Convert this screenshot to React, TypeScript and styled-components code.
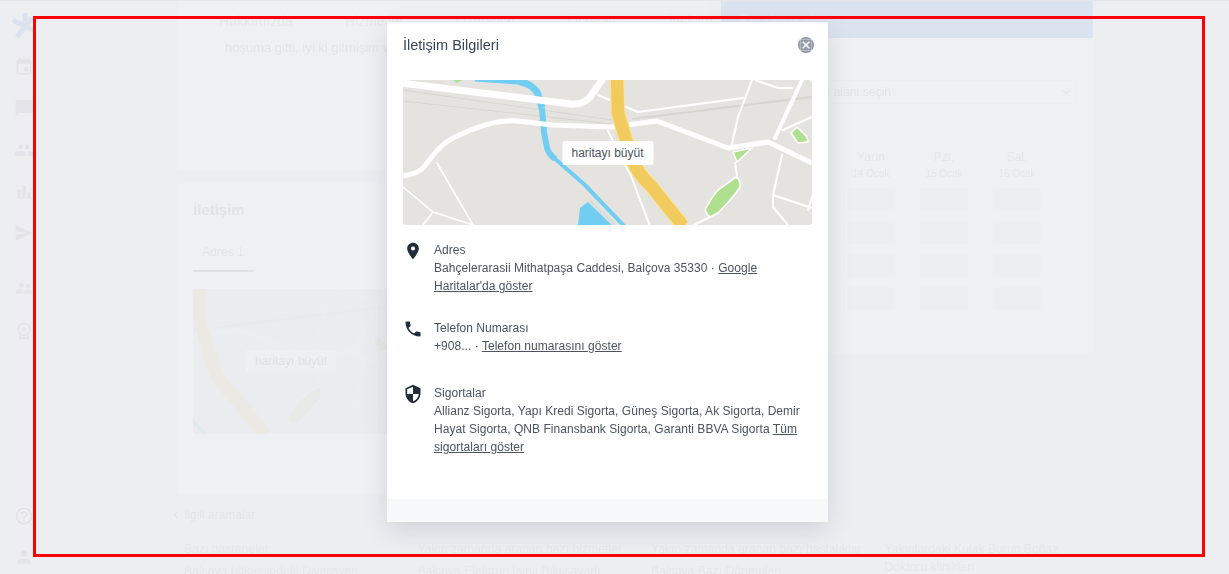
import styled, { createGlobalStyle } from "styled-components";
import {
  MdBarChart,
  MdChatBubble,
  MdClose,
  MdEvent,
  MdExpandMore,
  MdHelpOutline,
  MdChevronLeft,
  MdLocalPhone,
  MdLocationOn,
  MdOutlineWorkspacePremium,
  MdPeople,
  MdPerson,
  MdSecurity,
  MdSend,
  MdSupervisorAccount,
} from "react-icons/md";

const GlobalStyle = createGlobalStyle`
  html, body, #root {
    margin: 0;
    height: 100%;
    overflow: hidden;
  }
  body {
    background: #eceef2;
    font-family: "Liberation Sans", Arial, sans-serif;
  }
`;

const Page = styled.div`
  position: relative;
  display: flex;
  height: 574px;
  overflow: hidden;
  border-top: 1px solid #e3e5e8;
  box-sizing: border-box;
`;

const Behind = styled.div`
  display: flex;
  flex: 1;
  filter: blur(0.5px);
`;

const Sidebar = styled.nav`
  width: 48px;
  margin-right: 4px;
  display: flex;
  flex-direction: column;
  align-items: center;
  color: #e2e4e9;
  font-size: 20px;
  padding-top: 11px;
  box-sizing: border-box;
  height: 573px;
`;

const NavIcon = styled.div<{ $top: number }>`
  margin-top: ${(p) => p.$top}px;
  height: 24px;
  display: flex;
  align-items: center;
`;

const Main = styled.main`
  flex: 1;
  padding-left: 125px;
  min-width: 0;
`;

const Columns = styled.div`
  display: flex;
  gap: 12px;
  width: 916px;
`;

const LeftColumn = styled.div`
  width: 532px;
  display: flex;
  flex-direction: column;
  gap: 12px;
`;

const Card = styled.section<{ $height: number }>`
  height: ${(p) => p.$height}px;
  background: #eef0f3;
  border: 1px solid #edeff2;
  border-top: 0;
  box-sizing: border-box;
`;

const FaintTabs = styled.div`
  display: flex;
  gap: 52px;
  padding: 12px 0 0 41px;
  font-size: 14px;
  line-height: 16px;
  color: #e5e7eb;
`;

const ReviewText = styled.p`
  margin: 11px 0 0 47px;
  font-size: 13px;
  line-height: 16px;
  color: #e3e5e9;
  white-space: nowrap;
`;

const ContactHeading = styled.h2`
  margin: 17px 0 0 15px;
  font-size: 15px;
  line-height: 20px;
  font-weight: 700;
  color: #e1e3e7;
`;

const ContactTab = styled.div`
  display: inline-block;
  margin: 24px 0 0 15px;
  width: 60px;
  padding-bottom: 10px;
  text-align: center;
  font-size: 12px;
  line-height: 16px;
  color: #e3e5e9;
  border-bottom: 2px solid #dfe1e6;
`;

const FaintMap = styled.div`
  position: relative;
  width: 196px;
  height: 145px;
  margin: 17px 0 0 15px;
  background: #ebecef;
  border-radius: 3px;
  overflow: hidden;
`;

const FaintMapLabel = styled.div`
  position: absolute;
  left: 53px;
  top: 61px;
  width: 90px;
  height: 22px;
  line-height: 22px;
  text-align: center;
  background: #eeeff3;
  color: #dfe1e5;
  font-size: 12px;
`;

const RightColumn = styled.aside`
  width: 372px;
  height: 352px;
  background: #eef0f3;
  box-sizing: border-box;
`;

const Banner = styled.div`
  height: 37px;
  background: #dbe3ee;
  padding: 10px 0 0 18px;
  box-sizing: border-box;
  font-size: 14px;
  line-height: 16px;
  font-weight: 700;
  color: #e1e7f1;
`;

const FaintSelect = styled.div`
  margin: 42px 16px 0;
  height: 24px;
  box-sizing: border-box;
  border: 1px solid #ebedf0;
  border-radius: 3px;
  display: flex;
  align-items: center;
  justify-content: space-between;
  padding: 0 3px 0 55px;
  font-size: 12px;
  color: #e3e5e9;
`;

const Days = styled.div`
  display: flex;
  justify-content: flex-end;
  gap: 23px;
  padding: 45px 51px 0 0;
`;

const Day = styled.div`
  width: 50px;
  display: flex;
  flex-direction: column;
  align-items: center;
  color: #e4e6ea;
`;

const DayName = styled.div`
  font-size: 12px;
  line-height: 16px;
`;

const DayDate = styled.div`
  font-size: 10px;
  line-height: 14px;
  margin: 2px 0 7px;
`;

const Slot = styled.div`
  width: 48px;
  height: 23px;
  margin-bottom: 10px;
  background: #edeef2;
`;

const Related = styled.div`
  margin-left: -8px;
  padding-top: 1px;
`;

const RelatedTitle = styled.div`
  display: flex;
  align-items: center;
  font-size: 12px;
  line-height: 16px;
  color: #e3e5e9;

  svg {
    font-size: 14px;
    margin-right: 1px;
  }
`;

const RelatedGrid = styled.div`
  display: grid;
  grid-template-columns: repeat(4, 233.5px);
  margin: 17px 0 0 15px;
`;

const RelatedColumn = styled.div`
  padding-right: 20px;
  font-size: 12.2px;
  line-height: 18px;
  color: #e5e7eb;
`;

const RelatedLink = styled.div`
  margin-bottom: 4px;
`;

const Modal = styled.div`
  position: absolute;
  left: 387px;
  top: 21px;
  width: 441px;
  height: 500px;
  display: flex;
  flex-direction: column;
  background: #fff;
  border-radius: 2px;
  box-shadow: 0 8px 24px rgba(60, 70, 90, 0.16);
`;

const ModalHeader = styled.header`
  display: flex;
  align-items: flex-start;
  justify-content: space-between;
  padding: 12px 14px 0 16px;
  height: 58px;
  box-sizing: border-box;
  filter: blur(0.3px);
`;

const ModalTitle = styled.h1`
  margin: 0;
  font-size: 14.5px;
  line-height: 22px;
  font-weight: 400;
  color: #3b4554;
`;

const CloseButton = styled.button`
  width: 16px;
  height: 16px;
  margin-top: 3px;
  padding: 0;
  border: 0;
  border-radius: 50%;
  background: #959ca9;
  color: #fff;
  display: flex;
  align-items: center;
  justify-content: center;
  font-size: 12px;

  svg {
    stroke: #fff;
    stroke-width: 1.2;
  }
`;

const ModalBody = styled.div`
  flex: 1;
  padding: 0 16px;
  filter: blur(0.3px);
`;

const MapBox = styled.div`
  position: relative;
  height: 145px;
  border-radius: 3px;
  overflow: hidden;
  background: #e4e3df;
  margin-bottom: 16px;

  svg {
    display: block;
  }
`;

const MapButton = styled.button`
  position: absolute;
  left: 50%;
  top: 50%;
  transform: translate(-50%, -50%);
  width: 91px;
  height: 24px;
  padding: 0;
  border: 0;
  border-radius: 2px;
  background: #fff;
  color: #4b5361;
  font-family: inherit;
  font-size: 12px;
`;

const InfoRow = styled.div<{ $after: number }>`
  display: flex;
  gap: 11px;
  margin-bottom: ${(p) => p.$after}px;
`;

const InfoIcon = styled.div`
  flex: none;
  width: 20px;
  height: 20px;
  font-size: 20px;
  color: #1f2d3d;
  display: flex;
`;

const InfoText = styled.div`
  font-size: 12px;
  line-height: 18px;
  letter-spacing: 0.04px;
  color: #4b5361;
`;

const TextLink = styled.a`
  color: inherit;
  text-decoration: underline;
`;

const ModalFooter = styled.footer`
  height: 23px;
  background: #f7f8fa;
`;

const Marker = styled.div`
  position: absolute;
  left: 33px;
  top: 15px;
  width: 1172px;
  height: 541px;
  box-sizing: border-box;
  border: 3px solid #ff0000;
  pointer-events: none;
`;

const RoadMap = ({ viewBox, faded }: { viewBox: string; faded?: boolean }) => (
  <svg width="100%" height="100%" viewBox={viewBox} opacity={faded ? 0.08 : 1}>
    <g fill="none" stroke="#d6d5d0" strokeWidth="1">
      <path d="M0 10 L209 40" />
      <path d="M0 21 L209 44" />
      <path d="M229 39 L409 17" strokeWidth="2" />
    </g>
    <path d="M50 0 L59 0 L54 3 Z" fill="#aee08f" />
    <path d="M175 146 L177 128 L185 122 L210 146 Z" fill="#71cdf2" />
    <path d="M187 120 L213 146" fill="none" stroke="#d3dcdc" strokeWidth="2" />
    <g fill="none" stroke="#71cdf2" strokeLinejoin="round">
      <path d="M72 -2 L115 1 Q130 4 135 14 L139 28" strokeWidth="7" />
      <path d="M139 28 L141 52 L144 68 Q146 74 152 79" strokeWidth="6" />
      <path d="M150 77 L182 105 L222 147" strokeWidth="4" />
    </g>
    <g fill="none" stroke="#fff" strokeLinecap="round" strokeLinejoin="round">
      <path d="M-2 3 L168 24 Q180 25 187 17 L199 0" strokeWidth="7" />
      <path d="M205 51 L228 96 L247 146" strokeWidth="2" />
      <path d="M34 83 L70 145" strokeWidth="1.6" />
      <path d="M0 107 L30 132 L70 145 M30 132 L20 145" strokeWidth="1.6" />
      <path d="M195 15 L235 32 L340 18" strokeWidth="2" />
      <path d="M349 0 L335 37 L329 64" strokeWidth="2" />
      <path d="M399 0 L372 58" strokeWidth="4" />
      <path d="M352 0 L375 8 L389 8" strokeWidth="2" />
      <path d="M409 37 L380 50" strokeWidth="2" />
      <path d="M379 75 L370 115 L370 127 L385 145 M370 115 L409 128 M409 117 L405 130" strokeWidth="2" />
      <path d="M332 83 L334 96" strokeWidth="2" />
      <path d="M307 137 L289 146" strokeWidth="2" />
    </g>
    <path
      d="M0 96 Q14 94 20 88 L32 73 Q40 63 52 57 Q66 50 82 45 Q100 40 115 41 L149 45 L209 47 L254 41 L325 68 L365 62 L409 83"
      fill="none"
      stroke="#fff"
      strokeWidth="5"
      strokeLinejoin="round"
    />
    <path
      d="M214 -2 L215 33 L229 80 Q236 95 249 107 L280 146"
      fill="none"
      stroke="#f7e3a6"
      strokeWidth="15"
    />
    <path
      d="M214 -2 L215 33 L229 80 Q236 95 249 107 L280 146"
      fill="none"
      stroke="#f2cb5e"
      strokeWidth="12.5"
    />
    <g fill="#aee08f" stroke="#fff" strokeWidth="1.6" strokeLinejoin="round">
      <path d="M333 97 Q338 100 337 107 Q330 118 315 133 L307 137 Q304 135 302 130 Q308 118 315 110 Z" />
      <path d="M330 72 L349 68 L334 82 Z" />
      <path d="M394 47 L404 57 L405 62 L395 63 L388 53 Z" />
    </g>
  </svg>
);

const Logo = () => (
  <svg width="26" height="26" viewBox="0 0 26 26" fill="none" stroke="#dae2ee" strokeWidth="5">
    <path d="M2 8 L24 19" />
    <path d="M14 1 L14 10" />
    <path d="M21 6 L6 25" />
  </svg>
);

const dayNames = [
  { name: "Yarın", date: "14 Ocak" },
  { name: "Pzt,", date: "15 Ocak" },
  { name: "Sal,", date: "16 Ocak" },
];

export default function App() {
  return (
    <>
      <GlobalStyle />
      <Page>
        <Behind>
          <Sidebar>
            <Logo />
            <NavIcon $top={17}><MdEvent /></NavIcon>
            <NavIcon $top={17}><MdChatBubble /></NavIcon>
            <NavIcon $top={18}><MdPeople /></NavIcon>
            <NavIcon $top={18}><MdBarChart /></NavIcon>
            <NavIcon $top={17}><MdSend /></NavIcon>
            <NavIcon $top={31}><MdSupervisorAccount /></NavIcon>
            <NavIcon $top={19}><MdOutlineWorkspacePremium /></NavIcon>
            <NavIcon $top={161}><MdHelpOutline /></NavIcon>
            <NavIcon $top={17}><MdPerson /></NavIcon>
          </Sidebar>
          <Main>
            <Columns>
              <LeftColumn>
                <Card $height={170}>
                  <FaintTabs>
                    <span>Hakkımızda</span>
                    <span>Hizmetler</span>
                    <span>Uzmanlar</span>
                    <span>Ücretler</span>
                    <span>İletişim</span>
                  </FaintTabs>
                  <ReviewText>hoşuma gitti, iyi ki gitmişim ve</ReviewText>
                </Card>
                <Card $height={311}>
                  <ContactHeading>İletişim</ContactHeading>
                  <ContactTab>Adres 1</ContactTab>
                  <FaintMap>
                    <RoadMap viewBox="208 0 196 145" faded />
                    <FaintMapLabel>haritayı büyüt</FaintMapLabel>
                  </FaintMap>
                </Card>
                <Related>
                  <RelatedTitle>
                    <MdChevronLeft />
                    İlgili aramalar
                  </RelatedTitle>
                  <RelatedGrid>
                    <RelatedColumn>
                      <RelatedLink>Bazı hastaneler</RelatedLink>
                      <RelatedLink>Balçova bölgesindeki Diyetisyen</RelatedLink>
                    </RelatedColumn>
                    <RelatedColumn>
                      <RelatedLink>Yakın zamanda aranan bazı hizmetler</RelatedLink>
                      <RelatedLink>Balçova Elektron Işınlı Bilgisayarlı</RelatedLink>
                    </RelatedColumn>
                    <RelatedColumn>
                      <RelatedLink>Yakın zamanda aranan bazı hastalıklar</RelatedLink>
                      <RelatedLink>Balçova Bazı Dönemleri</RelatedLink>
                    </RelatedColumn>
                    <RelatedColumn>
                      <RelatedLink>Yakınlardaki Kulak Burun Boğaz Doktoru klinikleri</RelatedLink>
                    </RelatedColumn>
                  </RelatedGrid>
                </Related>
              </LeftColumn>
              <RightColumn>
                <Banner>Randevu al</Banner>
                <FaintSelect>
                  Hizmet alanı seçin
                  <MdExpandMore size={14} />
                </FaintSelect>
                <Days>
                  {dayNames.map((day) => (
                    <Day key={day.date}>
                      <DayName>{day.name}</DayName>
                      <DayDate>{day.date}</DayDate>
                      <Slot />
                      <Slot />
                      <Slot />
                      <Slot />
                    </Day>
                  ))}
                </Days>
              </RightColumn>
            </Columns>
          </Main>
        </Behind>

        <Modal>
          <ModalHeader>
            <ModalTitle>İletişim Bilgileri</ModalTitle>
            <CloseButton aria-label="Kapat">
              <MdClose />
            </CloseButton>
          </ModalHeader>
          <ModalBody>
            <MapBox>
              <RoadMap viewBox="0 0 409 145" />
              <MapButton>haritayı büyüt</MapButton>
            </MapBox>
            <InfoRow $after={24}>
              <InfoIcon><MdLocationOn /></InfoIcon>
              <InfoText>
                Adres
                <br />
                Bahçelerarasii Mithatpaşa Caddesi, Balçova 35330 · <TextLink>Google Haritalar'da göster</TextLink>
              </InfoText>
            </InfoRow>
            <InfoRow $after={29}>
              <InfoIcon><MdLocalPhone /></InfoIcon>
              <InfoText>
                Telefon Numarası
                <br />
                +908... · <TextLink>Telefon numarasını göster</TextLink>
              </InfoText>
            </InfoRow>
            <InfoRow $after={0}>
              <InfoIcon><MdSecurity /></InfoIcon>
              <InfoText>
                Sigortalar
                <br />
                Allianz Sigorta, Yapı Kredi Sigorta, Güneş Sigorta, Ak Sigorta, Demir Hayat Sigorta, QNB Finansbank Sigorta, Garanti BBVA Sigorta <TextLink>Tüm sigortaları göster</TextLink>
              </InfoText>
            </InfoRow>
          </ModalBody>
          <ModalFooter />
        </Modal>
        <Marker />
      </Page>
    </>
  );
}
